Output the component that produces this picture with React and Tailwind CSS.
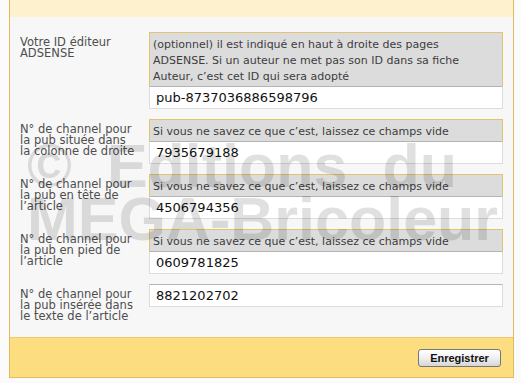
const rows = [
  {
    label: "Votre ID éditeur ADSENSE",
    hint: "(optionnel) il est indiqué en haut à droite des pages ADSENSE. Si un auteur ne met pas son ID dans sa fiche Auteur, c’est cet ID qui sera adopté",
    value: "pub-8737036886598796",
  },
  {
    label: "N° de channel pour la pub située dans la colonne de droite",
    hint: "Si vous ne savez ce que c’est, laissez ce champs vide",
    value: "7935679188",
  },
  {
    label: "N° de channel pour la pub en tête de l’article",
    hint: "Si vous ne savez ce que c’est, laissez ce champs vide",
    value: "4506794356",
  },
  {
    label: "N° de channel pour la pub en pied de l’article",
    hint: "Si vous ne savez ce que c’est, laissez ce champs vide",
    value: "0609781825",
  },
  {
    label: "N° de channel pour la pub insérée dans le texte de l’article",
    value: "8821202702",
  },
];

const Row = ({ label, hint, value }) => (
  <div className="flex items-start">
    <div className="w-[129px] shrink-0 pt-[5px] pr-[11px] text-[11.5px] leading-[11px] text-[#4e4e4e]">
      {label}
    </div>
    <div className="w-[354px]">
      {hint && (
        <div className="border-x border-t border-[#e2c46a] bg-[#dcdcdc] pl-[3px] pr-[8px] pt-[4px] pb-[1px] text-[11px] leading-[16px] text-[#3c3c3c]">
          {hint}
        </div>
      )}
      <div className="flex h-[23px] items-center border border-[#dcdcdc] border-t-[#b4b4b4] bg-white pl-[6px] text-[13px] text-[#111]">
        {value}
      </div>
    </div>
  </div>
);

export default function App() {
  return (
    <div className="min-h-screen bg-[#fbfbfb] font-['DejaVu_Sans',sans-serif]">
      <div className="relative ml-[9px] w-[505px] border-x border-b border-[#e3bb5c]">
        <div className="h-[17px] bg-[#fdf2cd]" />

        <div className="flex flex-col gap-[10px] bg-[#f7f7f7] pt-[15px] pb-[15px] pl-[10px] pr-[9px]">
          {rows.map((r, i) => (
            <Row key={i} {...r} />
          ))}
        </div>

        <div className="flex h-[40px] items-start justify-end border-t border-[#eccb6e] bg-[#fcdd80] pt-[11px] pr-[12px]">
          <button className="h-[18px] w-[83px] rounded-[3px] border border-[#767676] bg-gradient-to-b from-white via-[#f0f0f0] to-[#d6d6d6] font-['Liberation_Sans',sans-serif] text-[11px] font-bold leading-none text-[#111]">
            Enregistrer
          </button>
        </div>

        {/* filigrane */}
        <div className="pointer-events-none absolute left-[17px] top-[140px] select-none whitespace-nowrap font-['Liberation_Sans',sans-serif] text-[61px] font-bold leading-[53px] text-black/[0.12]">
          <div className="[word-spacing:18px]">© Editions du</div>
          <div>MEGA-Bricoleur</div>
        </div>
      </div>
    </div>
  );
}
